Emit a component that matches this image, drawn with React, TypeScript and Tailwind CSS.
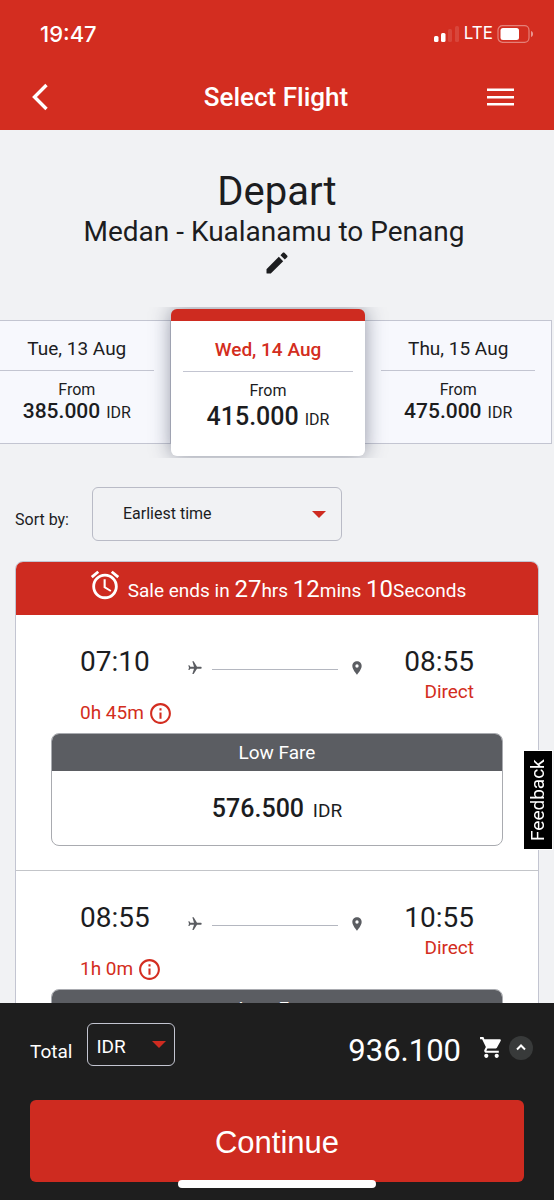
import { MdAlarm, MdFlight, MdInfoOutline, MdPlace, MdShoppingCart } from "react-icons/md";

type Fare = { date: string; price: string };
type Flight = { depart: string; arrive: string; duration: string; price: string };

const previousDay: Fare = { date: "Tue, 13 Aug", price: "385.000" };
const selectedDay: Fare = { date: "Wed, 14 Aug", price: "415.000" };
const nextDay: Fare = { date: "Thu, 15 Aug", price: "475.000" };

const flights: Flight[] = [
  { depart: "07:10", arrive: "08:55", duration: "0h 45m", price: "576.500" },
  { depart: "08:55", arrive: "10:55", duration: "1h 0m", price: "576.500" },
];

const StatusBar = () => (
  <div className="flex h-16 items-center justify-between pt-1 pr-5 pl-10">
    <span className="font-['Inter',sans-serif] text-[22px] font-medium">19:47</span>
    <div className="flex items-center gap-1">
      <svg width="27" height="18" viewBox="0 0 27 18" fill="currentColor" aria-hidden="true">
        <rect x="1" y="11" width="4.5" height="6" rx="1.5" />
        <rect x="8" y="8" width="4.5" height="9" rx="1.5" />
        <rect x="15" y="4" width="4" height="13" rx="1.5" opacity="0.12" />
        <rect x="22" y="1" width="4" height="16" rx="1.5" opacity="0.12" />
      </svg>
      <span className="font-['Inter',sans-serif] text-[17px]">LTE</span>
      <svg width="37" height="18" viewBox="0 0 37 18" aria-hidden="true">
        <rect x="1" y="0.7" width="31" height="16.6" rx="4.5" fill="none" stroke="white" strokeOpacity="0.4" strokeWidth="1.2" />
        <rect x="3.5" y="3" width="18.5" height="12" rx="2.5" fill="white" />
        <path d="M34 6c1.6.5 2 1.7 2 3s-.4 2.5-2 3z" fill="white" fillOpacity="0.5" />
      </svg>
    </div>
  </div>
);

const Header = () => (
  <header className="shrink-0 bg-[#d32d20] text-white">
    <StatusBar />
    <div className="grid h-[66px] grid-cols-[1fr_auto_1fr] items-center pr-[39px] pl-[31px]">
      <button type="button" aria-label="Back" className="justify-self-start">
        <svg width="17" height="28" viewBox="0 0 17 28" fill="none" stroke="currentColor" strokeWidth="3.4" aria-hidden="true">
          <path d="M15.500 2 3.500 14l12 12" />
        </svg>
      </button>
      <h1 className="pl-[6px] text-[26px] font-medium">Select Flight</h1>
      <button type="button" aria-label="Menu" className="justify-self-end">
        <svg width="29" height="20" viewBox="0 0 29 20" fill="currentColor" aria-hidden="true">
          <path d="M1 1.500h27v2.500H1zM1 9h27v2.500H1zM1 16h27v2.500H1z" />
        </svg>
      </button>
    </div>
  </header>
);

const SideDay = ({ fare }: { fare: Fare }) => (
  <button
    type="button"
    className="mt-[11px] mb-3 flex flex-col border-y border-r border-[#c3c5d1] bg-[#f7f8fd] px-4 text-center"
  >
    <span className="w-full border-b border-[#c3c5d1] pt-4 pb-[9px] text-[19px] leading-6">{fare.date}</span>
    <span className="w-full pt-[9px] text-base leading-5">From</span>
    <span className="w-full text-base leading-[26px]">
      <b className="mr-[2px] text-[21px] leading-5 font-medium">{fare.price}</b> IDR
    </span>
  </button>
);

const SelectedDay = ({ fare }: { fare: Fare }) => (
  <button
    type="button"
    className="relative flex flex-col rounded-md border-t-12 border-[#ce2b20] bg-white px-3 pb-5 text-center shadow-[0_0_20px_rgba(60,65,90,0.55)]"
  >
    <span className="w-full border-b border-[#c3c5d1] pt-[15px] pb-[7px] text-[19px] leading-7 font-medium text-[#d32d20]">
      {fare.date}
    </span>
    <span className="w-full pt-[9px] text-base leading-5">From</span>
    <span className="w-full text-base leading-8">
      <b className="mr-[2px] text-[25px] font-medium">{fare.price}</b> IDR
    </span>
  </button>
);

const Caret = () => (
  <svg width="14" height="7" viewBox="0 0 14 7" fill="#ce2b20" aria-hidden="true">
    <path d="M0 0h14L7 7z" />
  </svg>
);

const FlightRow = ({ flight }: { flight: Flight }) => (
  <article className="border-b border-[#c3c5c9] px-[35px] pt-[29px] pb-6">
    <div className="flex px-[29px] text-[28px] leading-9">
      <p>{flight.depart}</p>
      <div className="mr-[39px] ml-[37px] flex flex-1 items-center gap-[9px] pt-3 text-[#5b5d62]">
        <MdFlight size={16} className="rotate-90" />
        <span className="mt-[2px] h-px flex-1 bg-[#b4b7c0]" />
        <MdPlace size={16} className="ml-[2px]" />
      </div>
      <p>{flight.arrive}</p>
    </div>
    <div className="flex items-start justify-between px-[29px] text-[19px] text-[#d32d20]">
      <p className="mt-[15px] flex items-center gap-1 leading-9">
        {flight.duration}
        <button type="button" aria-label="Flight details">
          <MdInfoOutline size={25} />
        </button>
      </p>
      <p className="leading-6">Direct</p>
    </div>
    <button
      type="button"
      className="mt-[2px] block w-full overflow-hidden rounded-lg border border-[#a9abb0] text-center"
    >
      <span className="block bg-[#5b5d62] text-[19px] leading-[37px] text-white">Low Fare</span>
      <span className="block pt-[22px] pb-[18px] text-[19px] leading-8">
        <b className="mr-1 text-[25px] font-medium">{flight.price}</b> IDR
      </span>
    </button>
  </article>
);

const Footer = () => (
  <footer className="relative shrink-0 bg-[#1e1e1e] px-[30px] pb-[18px] text-white">
    <div className="flex h-[97px] items-center">
      <label htmlFor="currency" className="pt-[2px] text-[19px]">
        Total
      </label>
      <div className="relative mb-[14px] ml-[15px] flex items-center">
        <select
          id="currency"
          className="h-[43px] w-[88px] appearance-none rounded-md border border-[#c3c5d1] bg-transparent pt-[6px] pl-2 text-[19px]"
        >
          <option>IDR</option>
        </select>
        <span className="pointer-events-none absolute right-[9px]">
          <Caret />
        </span>
      </div>
      <output className="ml-auto text-[31px]">936.100</output>
      <MdShoppingCart size={25} className="mb-2 ml-[18px]" />
      <button type="button" aria-label="Show details" className="-mr-[9px] mb-2 ml-[5px] rounded-full bg-[#383a3a] p-[6px]">
        <svg width="12" height="12" viewBox="0 0 12 12" fill="none" stroke="currentColor" strokeWidth="2" aria-hidden="true">
          <path d="M2 7.5 6 3.5l4 4" />
        </svg>
      </button>
    </div>
    <button
      type="button"
      className="h-[82px] w-full rounded-md bg-[#ce2b20] pt-1 font-['Liberation_Sans',sans-serif] text-[31px]"
    >
      Continue
    </button>
    <div className="absolute bottom-3 left-1/2 h-2 w-[198px] -translate-x-1/2 rounded-full bg-white" />
  </footer>
);

export default function App() {
  return (
    <div className="flex h-screen flex-col overflow-hidden bg-[#f1f2f4] font-['Roboto',sans-serif] text-[#1c1d1f]">
      <Header />
      <main className="min-h-0 flex-1 overflow-hidden">
        <section className="flex flex-col items-center pt-[37px]">
          <h2 className="text-[40px] leading-[50px]">Depart</h2>
          <p className="pr-[6px] text-[28px] leading-[30px]">Medan - Kualanamu to Penang</p>
          <button type="button" aria-label="Edit search" className="mt-[2px]">
            <svg width="28" height="28" viewBox="0 0 24 24" fill="currentColor" aria-hidden="true">
              <path d="M3 17.46v3.04c0 .28.22.5.5.5h3.04c.13 0 .26-.05.35-.15L17.3 10.45l-3.75-3.75L3.15 17.1c-.1.1-.15.22-.15.36z" />
              <path d="M20.71 7.04c.39-.39.39-1.02 0-1.41l-2.34-2.34c-.39-.39-1.02-.39-1.41 0L14.95 5.3l3.75 3.75z" />
            </svg>
          </button>
        </section>

        <section className="mt-[30px] overflow-hidden py-[2px]">
          <div className="mr-[2px] -ml-4 grid grid-cols-[23fr_24fr_23fr]">
            <SideDay fare={previousDay} />
            <SelectedDay fare={selectedDay} />
            <SideDay fare={nextDay} />
          </div>
        </section>

        <div className="mt-[29px] flex items-center gap-[23px] px-[15px]">
          <label htmlFor="sort" className="pt-3 text-base">
            Sort by:
          </label>
          <div className="relative flex items-center">
            <select
              id="sort"
              className="h-[54px] w-[250px] appearance-none rounded-md border border-[#b9bbc6] bg-transparent pl-[30px] text-base"
            >
              <option>Earliest time</option>
            </select>
            <span className="pointer-events-none absolute right-4">
              <Caret />
            </span>
          </div>
        </div>

        <section className="mx-[15px] mt-5 overflow-hidden rounded-lg border border-[#c3c5d1] bg-white">
          <div className="flex h-[53px] items-center justify-center gap-[6px] bg-[#ce2b20] text-white">
            <MdAlarm size={34} className="mb-2" />
            <p className="pt-[2px] text-[19px]">
              Sale ends in <span className="text-2xl">27</span>hrs <span className="text-2xl">12</span>mins{" "}
              <span className="text-2xl">10</span>Seconds
            </p>
          </div>
          {flights.map((flight) => (
            <FlightRow key={flight.depart} flight={flight} />
          ))}
        </section>
      </main>
      <Footer />
      <button
        type="button"
        className="fixed top-[751px] right-[2px] h-[98px] w-7 rotate-180 bg-black text-[19px] text-white outline outline-white [writing-mode:vertical-rl]"
      >
        Feedback
      </button>
    </div>
  );
}
